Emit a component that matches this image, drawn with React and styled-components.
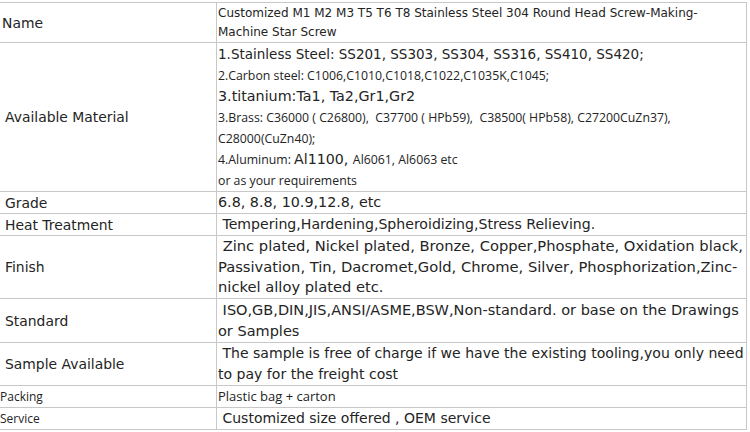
import React from 'react'
import styled, { createGlobalStyle } from 'styled-components';

const Global = createGlobalStyle`
  html, body {
    margin: 0;
    padding: 0;
    background: #fff;
  }
`;

const Page = styled.div`
  width: 750px;
  height: 432px;
  overflow: hidden;
  padding-top: 2px;
  box-sizing: border-box;
  color: #242424;
`;

const Table = styled.div`
  width: 747px;
  border-top: 1px solid #c8c8c8;
  border-right: 1px solid #c8c8c8;
  box-sizing: border-box;
`;

const Row = styled.div`
  display: grid;
  grid-template-columns: 217px 1fr;
  height: ${p => p.h}px;
  border-bottom: 1px solid #c8c8c8;
  box-sizing: border-box;
`;

const Label = styled.div`
  display: flex;
  align-items: center;
  border-right: 1px solid #c8c8c8;
  padding-left: ${p => p.indent ?? 5}px;
  font-family: ${p => p.small ? '"Open Sans", "Noto Sans", sans-serif' : '"DejaVu Sans", Verdana, sans-serif'};
  font-size: ${p => p.small ? '12px' : '13.9px'};
  white-space: nowrap;
`;

const Value = styled.div`
  display: flex;
  flex-direction: column;
  justify-content: center;
  padding-left: 1px;
  min-width: 0;
`;

const Line = styled.div`
  height: ${p => p.lh ?? 21}px;
  line-height: ${p => p.lh ?? 21}px;
  white-space: pre;
  font-family: "DejaVu Sans", Verdana, sans-serif;
  font-size: ${p => p.fs ?? 14.2}px;
`;

const Small = styled.span`
  font-family: "Open Sans", "Noto Sans", sans-serif;
  font-size: ${p => p.fs ?? 12.3}px;
`;

const App = () => {
  return (
    <Page>
      <Global />
      <Table>
        <Row h={40}>
          <Label indent={2}>Name</Label>
          <Value>
            <Line fs={12} lh={20}>Customized M1 M2 M3 T5 T6 T8 Stainless Steel 304 Round Head Screw-Making-</Line>
            <Line fs={12} lh={19}>Machine Star Screw</Line>
          </Value>
        </Row>
        <Row h={149}>
          <Label>Available Material</Label>
          <Value>
            <Line fs={13.5}>1.Stainless Steel: SS201, SS303, SS304, SS316, SS410, SS420;</Line>
            <Line><Small>2.Carbon steel: C1006,C1010,C1018,C1022,C1035K,C1045;</Small></Line>
            <Line fs={14.3}>3.titanium:Ta1, Ta2,Gr1,Gr2</Line>
            <Line><Small>3.Brass: C36000 ( C26800),  C37700 ( HPb59),  C38500( HPb58), C27200CuZn37),</Small></Line>
            <Line><Small>C28000(CuZn40);</Small></Line>
            <Line><Small>4.Aluminum: </Small>Al1100, <Small>Al6061, Al6063 etc</Small></Line>
            <Line><Small>or as your requirements</Small></Line>
          </Value>
        </Row>
        <Row h={22}>
          <Label>Grade</Label>
          <Value><Line fs={14.3}>6.8, 8.8, 10.9,12.8, etc</Line></Value>
        </Row>
        <Row h={22}>
          <Label>Heat Treatment</Label>
          <Value><Line fs={14.1}> Tempering,Hardening,Spheroidizing,Stress Relieving.</Line></Value>
        </Row>
        <Row h={63}>
          <Label>Finish</Label>
          <Value>
            <Line fs={14.7} lh={20.7}> Zinc plated, Nickel plated, Bronze, Copper,Phosphate, Oxidation black,</Line>
            <Line fs={14.7} lh={20.7}>Passivation, Tin, Dacromet,Gold, Chrome, Silver, Phosphorization,Zinc-</Line>
            <Line fs={14.7} lh={20.7}>nickel alloy plated etc.</Line>
          </Value>
        </Row>
        <Row h={44}>
          <Label>Standard</Label>
          <Value>
            <Line fs={14.5}> ISO,GB,DIN,JIS,ANSI/ASME,BSW,Non-standard. or base on the Drawings</Line>
            <Line fs={14.5}>or Samples</Line>
          </Value>
        </Row>
        <Row h={43}>
          <Label>Sample Available</Label>
          <Value>
            <Line fs={14.05}> The sample is free of charge if we have the existing tooling,you only need</Line>
            <Line fs={14.05}>to pay for the freight cost</Line>
          </Value>
        </Row>
        <Row h={22}>
          <Label small indent={0}>Packing</Label>
          <Value><Line><Small fs={13}>Plastic bag + carton</Small></Line></Value>
        </Row>
        <Row h={22}>
          <Label small indent={0}>Service</Label>
          <Value><Line fs={14}> Customized size offered , OEM service</Line></Value>
        </Row>
      </Table>
    </Page>
  )
}

export default App
